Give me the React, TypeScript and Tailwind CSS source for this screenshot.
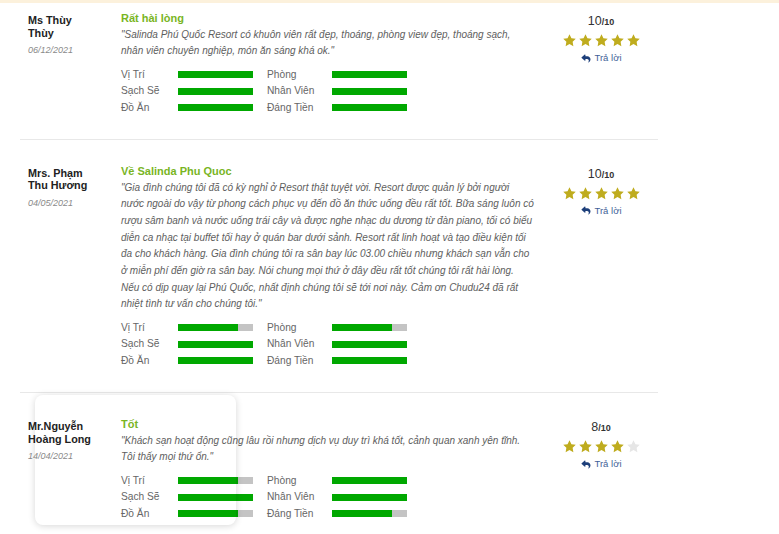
import React from "react";

type Rating = { label: string; value: number };
type Review = {
  name: string[];
  date: string;
  title: string;
  lines: string[];
  score: number;
  stars: number;
  left: Rating[];
  right: Rating[];
};

const reviews: Review[] = [
  {
    name: ["Ms Thùy", "Thùy"],
    date: "06/12/2021",
    title: "Rất hài lòng",
    lines: [
      "\"Salinda Phú Quốc Resort có khuôn viên rất đẹp, thoáng, phòng view đẹp, thoáng sạch,",
      "nhân viên chuyên nghiệp, món ăn sáng khá ok.\"",
    ],
    score: 10,
    stars: 5,
    left: [
      { label: "Vị Trí", value: 100 },
      { label: "Sạch Sẽ", value: 100 },
      { label: "Đồ Ăn", value: 100 },
    ],
    right: [
      { label: "Phòng", value: 100 },
      { label: "Nhân Viên", value: 100 },
      { label: "Đáng Tiền", value: 100 },
    ],
  },
  {
    name: ["Mrs. Phạm", "Thu Hương"],
    date: "04/05/2021",
    title: "Về Salinda Phu Quoc",
    lines: [
      "\"Gia đình chúng tôi đã có kỳ nghỉ ở Resort thật tuyệt vời. Resort được quản lý bởi người",
      "nước ngoài do vậy từ phong cách phục vụ đến đồ ăn thức uống đều rất tốt. Bữa sáng luôn có",
      "rượu sâm banh và nước uống trái cây và được nghe nhạc du dương từ đàn piano, tối có biểu",
      "diễn ca nhạc tại buffet tối hay ở quán bar dưới sảnh. Resort rất linh hoạt và tạo điều kiện tối",
      "đa cho khách hàng. Gia đình chúng tôi ra sân bay lúc 03.00 chiều nhưng khách sạn vẫn cho",
      "ở miễn phí đến giờ ra sân bay. Nói chung mọi thứ ở đây đều rất tốt chúng tôi rất hài lòng.",
      "Nếu có dịp quay lại Phú Quốc, nhất định chúng tôi sẽ tới nơi này. Cảm ơn Chudu24 đã rất",
      "nhiệt tình tư vấn cho chúng tôi.\"",
    ],
    score: 10,
    stars: 5,
    left: [
      { label: "Vị Trí", value: 80 },
      { label: "Sạch Sẽ", value: 100 },
      { label: "Đồ Ăn", value: 100 },
    ],
    right: [
      { label: "Phòng", value: 80 },
      { label: "Nhân Viên", value: 100 },
      { label: "Đáng Tiền", value: 100 },
    ],
  },
  {
    name: ["Mr.Nguyễn", "Hoàng Long"],
    date: "14/04/2021",
    title: "Tốt",
    lines: [
      "\"Khách sạn hoạt động cũng lâu rồi nhưng dịch vụ duy trì khá tốt, cảnh quan xanh yên tĩnh.",
      "Tôi thấy mọi thứ ổn.\"",
    ],
    score: 8,
    stars: 4,
    left: [
      { label: "Vị Trí", value: 80 },
      { label: "Sạch Sẽ", value: 100 },
      { label: "Đồ Ăn", value: 80 },
    ],
    right: [
      { label: "Phòng", value: 100 },
      { label: "Nhân Viên", value: 100 },
      { label: "Đáng Tiền", value: 80 },
    ],
  },
];

function Star({ filled }: { filled: boolean }) {
  return (
    <svg width="15" height="15" viewBox="0 0 24 24">
      <path
        d="M12 2l3.09 6.26L22 9.27l-5 4.87 1.18 6.88L12 17.77l-6.18 3.25L7 14.14 2 9.27l6.91-1.01L12 2z"
        fill={filled ? "#bfac1e" : "#e6e6e6"}
      />
    </svg>
  );
}

function ReplyIcon() {
  return (
    <svg width="10" height="9" viewBox="0 0 512 512">
      <path
        fill="#1d3f7a"
        d="M205 34.8c11.5 5.1 19 16.6 19 29.2v64H336c97.2 0 176 78.8 176 176c0 113.3-81.5 163.9-100.2 174.1c-2.5 1.4-5.3 1.9-8.1 1.9c-10.9 0-19.7-8.9-19.7-19.7c0-7.5 4.3-14.4 9.8-19.5c9.4-8.8 22.2-26.4 22.2-56.7c0-53-43-96-96-96H224v64c0 12.6-7.4 24.1-19 29.2s-25 3-34.4-5.4l-160-144C3.9 225.7 0 217.1 0 208s3.9-17.7 10.6-23.8l160-144c9.4-8.5 22.9-10.6 34.4-5.4z"
      />
    </svg>
  );
}

function Bar({ value }: { value: number }) {
  return (
    <div className="w-[75px] h-[7px] bg-[#c4c4c4] flex">
      <div className="h-full bg-[#00a800]" style={{ width: `${value}%` }} />
    </div>
  );
}

function RatingRow({ l, r }: { l: Rating; r: Rating }) {
  return (
    <div className="flex items-center h-[16.67px]">
      <div className="w-[57px] text-[10.2px] text-[#666]">{l.label}</div>
      <Bar value={l.value} />
      <div className="w-[14px]" />
      <div className="w-[65px] text-[10.2px] text-[#666]">{r.label}</div>
      <Bar value={r.value} />
    </div>
  );
}

function ReviewBlock({ review, first, last }: { review: Review; first?: boolean; last?: boolean }) {
  return (
    <div
      className={
        "relative flex pl-[8px] " +
        (first ? "pt-[7px] " : "pt-[23px] ") +
        (last ? "pb-[23px]" : "pb-[23px] border-b border-[#e8e8e8]")
      }
    >
      {last && (
        <div className="absolute left-[15px] top-[2px] w-[201px] h-[130px] rounded-[8px] shadow-[0_1px_7px_rgba(0,0,0,0.16)] pointer-events-none" />
      )}
      <div className="w-[93px] shrink-0 pt-[4px]">
        <div className="text-[10.8px] leading-[12.5px] font-bold text-[#222]">
          {review.name.map((n) => (
            <div key={n}>{n}</div>
          ))}
        </div>
        <div className="mt-[5px] text-[9px] leading-[12px] italic text-[#8a8a8a]">{review.date}</div>
      </div>
      <div className="w-[434px] shrink-0">
        <div className="text-[11px] leading-[16.67px] font-bold text-[#79b51f]">{review.title}</div>
        <div className="text-[10px] leading-[16.67px] italic text-[#5e5e5e] whitespace-nowrap">
          {review.lines.map((line, i) => (
            <div key={i}>{line}</div>
          ))}
        </div>
        <div className="mt-[6px]">
          {review.left.map((l, i) => (
            <RatingRow key={i} l={l} r={review.right[i]} />
          ))}
        </div>
      </div>
      <div className="w-[92px] shrink-0 flex flex-col items-center pt-[2px]">
        <div className="leading-[16px] text-[#333]">
          <span className="text-[12.5px]">{review.score}</span>
          <span className="text-[9px] font-bold">/10</span>
        </div>
        <div className="mt-[3px] h-[15px] flex gap-[1px]">
          {[0, 1, 2, 3, 4].map((i) => (
            <Star key={i} filled={i < review.stars} />
          ))}
        </div>
        <div className="mt-[3px] h-[14px] flex items-center gap-[4px]">
          <ReplyIcon />
          <span className="text-[9.5px] text-[#3f5f98]">Trả lời</span>
        </div>
      </div>
    </div>
  );
}

export default function App() {
  return (
    <div className="w-[779px] h-[534px] overflow-hidden bg-white font-['Liberation_Sans',Arial,sans-serif]">
      <div className="h-[3px] bg-[#fcf1dc]" />
      <div className="ml-[20px] w-[638px]">
        {reviews.map((r, i) => (
          <ReviewBlock key={i} review={r} first={i === 0} last={i === reviews.length - 1} />
        ))}
      </div>
    </div>
  );
}
